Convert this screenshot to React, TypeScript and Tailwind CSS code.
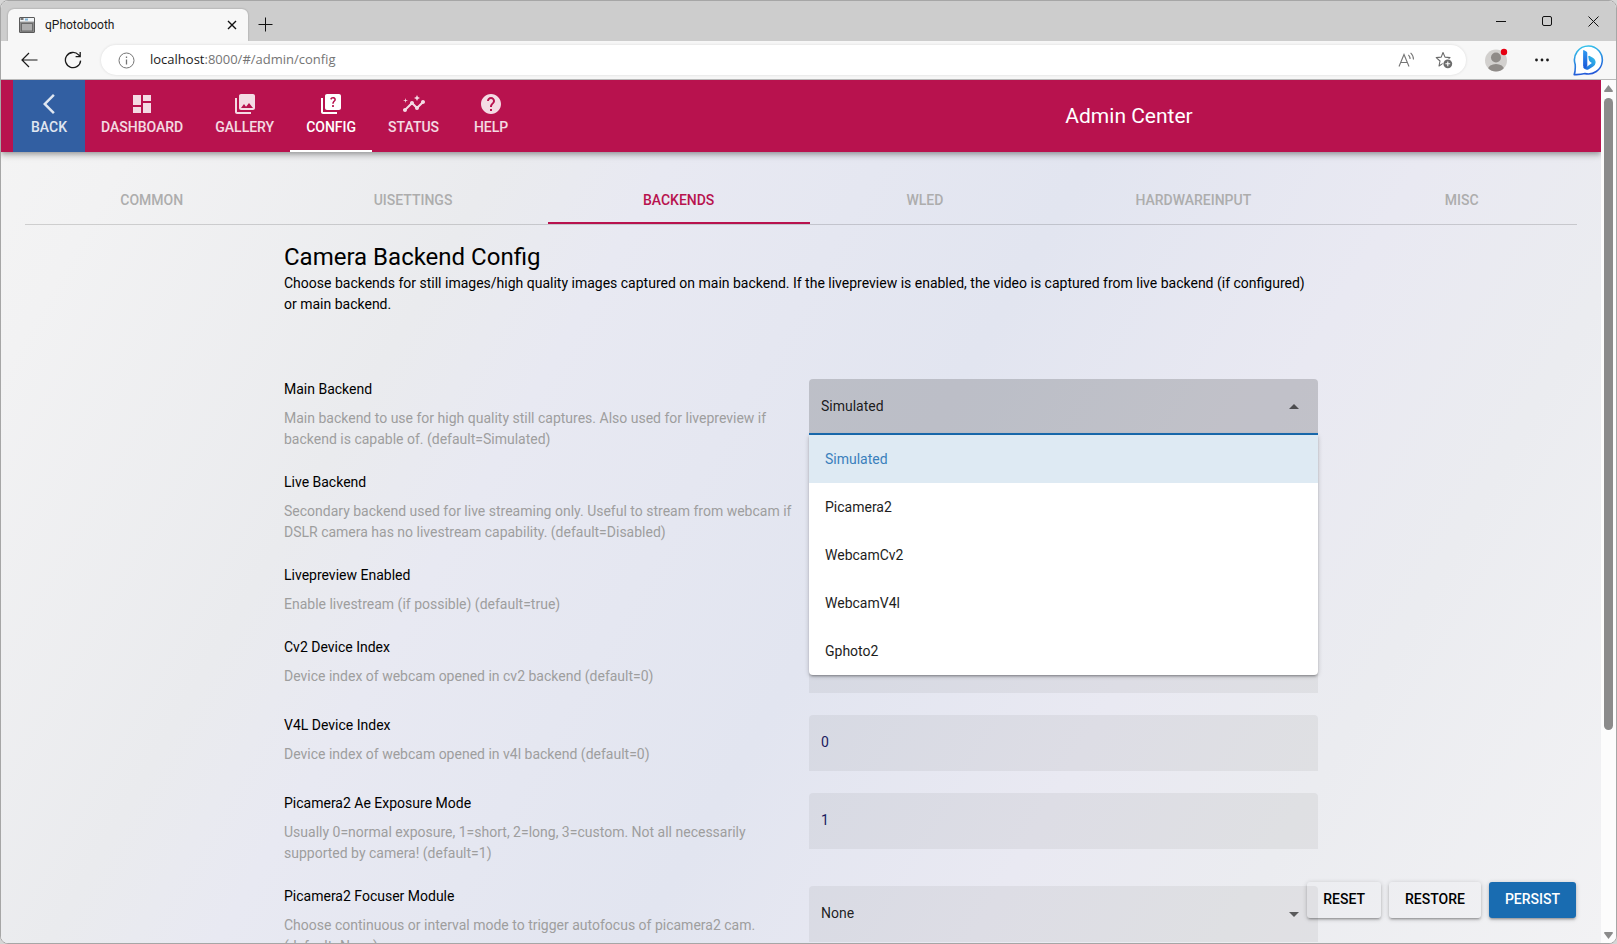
import { useState, type ReactNode } from "react";
import {
  MdArrowBackIosNew,
  MdDashboard,
  MdPhotoLibrary,
  MdQuiz,
  MdInsights,
  MdHelp,
  MdArrowDropDown,
  MdArrowDropUp,
} from "react-icons/md";

type Field = {
  id: string;
  label: string;
  hint: string;
  kind: "select" | "number" | "toggle";
  value: string;
  options?: string[];
};

const BACKENDS = ["Simulated", "Picamera2", "WebcamCv2", "WebcamV4l", "Gphoto2"];

const FIELDS: Field[] = [
  {
    id: "main-backend",
    label: "Main Backend",
    hint: "Main backend to use for high quality still captures. Also used for livepreview if backend is capable of. (default=Simulated)",
    kind: "select",
    value: "Simulated",
    options: BACKENDS,
  },
  {
    id: "live-backend",
    label: "Live Backend",
    hint: "Secondary backend used for live streaming only. Useful to stream from webcam if DSLR camera has no livestream capability. (default=Disabled)",
    kind: "select",
    value: "Disabled",
    options: ["Disabled", ...BACKENDS],
  },
  {
    id: "livepreview",
    label: "Livepreview Enabled",
    hint: "Enable livestream (if possible) (default=true)",
    kind: "toggle",
    value: "true",
  },
  {
    id: "cv2-index",
    label: "Cv2 Device Index",
    hint: "Device index of webcam opened in cv2 backend (default=0)",
    kind: "number",
    value: "0",
  },
  {
    id: "v4l-index",
    label: "V4L Device Index",
    hint: "Device index of webcam opened in v4l backend (default=0)",
    kind: "number",
    value: "0",
  },
  {
    id: "ae-mode",
    label: "Picamera2 Ae Exposure Mode",
    hint: "Usually 0=normal exposure, 1=short, 2=long, 3=custom. Not all necessarily supported by camera! (default=1)",
    kind: "number",
    value: "1",
  },
  {
    id: "focuser",
    label: "Picamera2 Focuser Module",
    hint: "Choose continuous or interval mode to trigger autofocus of picamera2 cam. (default=None)",
    kind: "select",
    value: "None",
    options: ["None", "Continuous", "Interval"],
  },
];

const NAV = [
  { label: "DASHBOARD", Icon: MdDashboard },
  { label: "GALLERY", Icon: MdPhotoLibrary },
  { label: "CONFIG", Icon: MdQuiz },
  { label: "STATUS", Icon: MdInsights },
  { label: "HELP", Icon: MdHelp },
];

const TABS = ["COMMON", "UISETTINGS", "BACKENDS", "WLED", "HARDWAREINPUT", "MISC"];

function ChromeButton({ label, children }: { label: string; children: ReactNode }) {
  return (
    <button type="button" aria-label={label} className="flex items-center justify-center">
      {children}
    </button>
  );
}

function TitleBar() {
  return (
    <div className="flex h-10 shrink-0 items-end bg-[#cdcdcd] pl-[7px]">
      <div className="flex h-8 w-[240px] items-center rounded-t-[6px] bg-[#f7f7f7] pr-[11px] pl-[11px] shadow-[0_0_2px_rgba(0,0,0,0.3)]">
        <svg width="16" height="16" viewBox="0 0 16 16" aria-hidden="true">
          <rect x="0.5" y="0.5" width="15" height="15" rx="0.5" fill="#8c8c8c" stroke="#5a5a5a" />
          <rect x="1" y="1" width="14" height="3.6" fill="#f2f5f7" />
          <rect x="1.5" y="1.2" width="3" height="1.6" fill="#555" />
          <rect x="6" y="1.5" width="3" height="2" fill="#7fb4d6" />
          <rect x="2.5" y="6.5" width="11" height="7.5" fill="#adadad" stroke="#6a6a6a" />
        </svg>
        <span className="ml-[10px] flex-1 text-xs text-[#1b1b1b]">qPhotobooth</span>
        <ChromeButton label="Close tab">
          <svg width="10" height="10" viewBox="0 0 10 10" stroke="#111" strokeWidth="1.4" aria-hidden="true">
            <path d="M1 1l8 8M9 1l-8 8" />
          </svg>
        </ChromeButton>
      </div>
      <div className="flex h-8 flex-1 items-center pb-px pl-[10px]">
        <ChromeButton label="New tab">
          <svg width="15" height="15" viewBox="0 0 15 15" stroke="#111" aria-hidden="true">
            <path d="M7.5 0.5v14M0.5 7.5h14" />
          </svg>
        </ChromeButton>
      </div>
      <div className="flex h-10 items-center gap-9 pr-[17px]">
        <ChromeButton label="Minimize">
          <svg width="10" height="10" viewBox="0 0 10 10" stroke="#111" aria-hidden="true">
            <path d="M0 5.5h10" />
          </svg>
        </ChromeButton>
        <ChromeButton label="Maximize">
          <svg width="10" height="10" viewBox="0 0 10 10" fill="none" stroke="#111" aria-hidden="true">
            <rect x="0.5" y="0.5" width="9" height="9" rx="1.5" />
          </svg>
        </ChromeButton>
        <ChromeButton label="Close window">
          <svg width="11" height="11" viewBox="0 0 11 11" stroke="#111" aria-hidden="true">
            <path d="M0.5 0.5l10 10M10.5 0.5l-10 10" />
          </svg>
        </ChromeButton>
      </div>
    </div>
  );
}

function AddressBar() {
  return (
    <div className="flex h-[39px] shrink-0 items-center border-b border-[#b9b9b9] bg-[#f7f7f7] pr-3 pl-5">
      <ChromeButton label="Back">
        <svg width="17" height="16" viewBox="0 0 17 16" fill="none" stroke="#1b1b1b" strokeWidth="1.2" aria-hidden="true">
          <path d="M16.5 8H1M8 1L1 8l7 7" />
        </svg>
      </ChromeButton>
      <div className="ml-[26px] flex">
        <ChromeButton label="Refresh">
          <svg width="18" height="18" viewBox="0 0 18 18" fill="none" stroke="#1b1b1b" strokeWidth="1.3" aria-hidden="true">
            <path d="M16.6 9.6A7.6 7.6 0 1 1 14.6 3.9L16 5.4M16.2 1v4.6h-4.6" />
          </svg>
        </ChromeButton>
      </div>
      <div className="ml-[19px] flex h-[30px] flex-1 items-center rounded-full bg-white pr-[13px] pl-[17px] shadow-[0_0_3px_rgba(0,0,0,0.12)]">
        <svg width="17" height="17" viewBox="0 0 17 17" fill="none" stroke="#757575" aria-hidden="true">
          <circle cx="8.5" cy="8.5" r="7.5" />
          <path d="M8.5 7.5v5M8.5 4.5v1.4" strokeWidth="1.3" />
        </svg>
        <p className="ml-[15px] flex-1 font-['Open_Sans','Noto_Sans',sans-serif] text-[13px] text-[#757575]">
          <span className="text-[#1b1b1b]">localhost</span>:8000/#/admin/config
        </p>
        <ChromeButton label="Read aloud">
          <svg width="17" height="16" viewBox="0 0 17 16" fill="none" stroke="#757575" strokeWidth="1.1" aria-hidden="true">
            <path d="M1 14.5L6 2.5l5 12M2.8 10.5h6.4M10.4 2.8q1.6 1.6 1.7 4.2M12.6 0.8q2.9 2.6 2.9 6.6" />
          </svg>
        </ChromeButton>
        <div className="ml-5 flex">
          <ChromeButton label="Add to favorites">
            <svg width="18" height="18" viewBox="0 0 18 18" aria-hidden="true">
              <path
                d="M8 1.5l2 4.6 5 .5-3.7 3.3L12 15l-4-2.6L4 15l1-5L1.2 6.6l5-.5z"
                fill="none"
                stroke="#6b6b6b"
                strokeWidth="1.1"
                strokeLinejoin="round"
              />
              <circle cx="12.8" cy="12.8" r="5.2" fill="#fff" />
              <circle cx="12.8" cy="12.8" r="4.4" fill="#6b6b6b" />
              <path d="M12.8 10.4v4.8M10.4 12.8h4.8" stroke="#fff" strokeWidth="1.1" />
            </svg>
          </ChromeButton>
        </div>
      </div>
      <div className="ml-[18px] flex items-center gap-[27px]">
        <ChromeButton label="Profile">
          <svg width="24" height="24" viewBox="0 0 24 24" aria-hidden="true">
            <clipPath id="avatar">
              <circle cx="12" cy="12.5" r="11" />
            </clipPath>
            <circle cx="12" cy="12.5" r="11" fill="#d2d0ce" />
            <circle cx="12" cy="9.5" r="5" fill="#8f8b88" />
            <ellipse cx="12" cy="21.5" rx="8" ry="5.5" fill="#8f8b88" clipPath="url(#avatar)" />
            <circle cx="20" cy="4" r="3.2" fill="#e60012" />
          </svg>
        </ChromeButton>
        <ChromeButton label="Settings and more">
          <svg width="14" height="4" viewBox="0 0 14 4" fill="#1b1b1b" aria-hidden="true">
            <circle cx="1.5" cy="2" r="1.4" />
            <circle cx="7" cy="2" r="1.4" />
            <circle cx="12.5" cy="2" r="1.4" />
          </svg>
        </ChromeButton>
      </div>
      <div className="ml-6 flex">
        <ChromeButton label="Discover">
          <svg width="31" height="31" viewBox="0 0 31 31" aria-hidden="true">
            <defs>
              <linearGradient id="ring" x1="0.3" y1="0" x2="0.5" y2="1">
                <stop offset="0" stopColor="#35c3ea" />
                <stop offset="1" stopColor="#2456d8" />
              </linearGradient>
              <linearGradient id="stem" x1="0" y1="0" x2="0" y2="1">
                <stop offset="0" stopColor="#2f9bf2" />
                <stop offset="1" stopColor="#1b57d8" />
              </linearGradient>
              <linearGradient id="bowl" x1="1" y1="0" x2="0" y2="1">
                <stop offset="0" stopColor="#33c5ea" />
                <stop offset="1" stopColor="#1b5fdc" />
              </linearGradient>
            </defs>
            <path
              d="M15.5 1A14 14 0 1 1 12 28.6Q7 29.9 1.2 29.6Q2.6 26 2.2 19.5A14 14 0 0 1 15.5 1z"
              fill="#fff"
              stroke="url(#ring)"
              strokeWidth="1.6"
              strokeLinejoin="round"
            />
            <path
              d="M15.2 11.2q0.6-0.6 1.5-0.2l3.2 1.7q2.9 1.8 2.7 5-0.2 2.2-2.4 3.7l-4.4 2.8q-2.6 1.3-4.8-0.6-0.9-0.9-0.7-2 2.4 1 4.6-0.6l4-3.1-1.5-1q-1.2-0.6-1.5-1.8z"
              fill="url(#bowl)"
            />
            <path d="M10.1 5.6q0.2-0.8 1-0.4l2.2 1.2q1 0.6 1 1.6v12.4q-0.4 2.4-2.2 2.6-2-0.4-2-2.8z" fill="url(#stem)" />
          </svg>
        </ChromeButton>
      </div>
    </div>
  );
}

function Header() {
  return (
    <header className="relative z-10 flex h-[72px] shrink-0 items-stretch bg-[#b8124e] px-3 shadow-[0_2px_4px_-1px_rgba(0,0,0,0.2),0_4px_5px_rgba(0,0,0,0.14),0_1px_10px_rgba(0,0,0,0.12)]">
      <nav className="flex text-sm font-medium text-white">
        <a href="#/" className="flex min-w-[72px] flex-col items-center bg-[#325fa2] px-4 pt-3">
          <MdArrowBackIosNew className="size-6 opacity-85" />
          <span className="leading-[22px] opacity-85">BACK</span>
        </a>
        {NAV.map(({ label, Icon }) => {
          const active = label === "CONFIG";
          return (
            <a
              key={label}
              href={`#/admin/${label.toLowerCase()}`}
              aria-current={active ? "page" : undefined}
              className={
                active
                  ? "flex min-w-[72px] flex-col items-center border-b-2 border-white px-4 pt-3"
                  : "flex min-w-[72px] flex-col items-center px-4 pt-3 text-white/85"
              }
            >
              <Icon className="size-6" />
              <span className="leading-[22px]">{label}</span>
            </a>
          );
        })}
      </nav>
      <h1 className="flex-1 self-center pl-[142px] text-center text-[21px] leading-8 text-white">Admin Center</h1>
    </header>
  );
}

function Control({ field }: { field: Field }) {
  const [value, setValue] = useState(field.value);
  const open = field.id === "main-backend";

  if (field.kind === "toggle") {
    return (
      <div className="flex h-10 items-center">
        <input id={field.id} type="checkbox" defaultChecked className="size-5 accent-[#196cb1]" />
      </div>
    );
  }

  if (field.kind === "number") {
    return (
      <input
        id={field.id}
        type="text"
        inputMode="numeric"
        value={value}
        onChange={(e) => setValue(e.target.value)}
        className="h-14 w-full rounded-t bg-black/5 px-3 pb-0.5 text-[#1a1a5e]"
      />
    );
  }

  return (
    <div className="relative self-start">
      <select
        id={field.id}
        value={value}
        onChange={(e) => setValue(e.target.value)}
        className={
          open
            ? "block h-14 w-full appearance-none rounded-t border-b-2 border-[#196cb1] bg-black/17 px-3 text-black/87"
            : "block h-14 w-full appearance-none rounded-t bg-black/5 px-3 pb-0.5 text-black/87"
        }
      >
        {field.options?.map((o) => (
          <option key={o}>{o}</option>
        ))}
      </select>
      <span className="pointer-events-none absolute inset-y-0 right-3 flex items-center text-black/60">
        {open ? <MdArrowDropUp className="size-6" /> : <MdArrowDropDown className="size-6" />}
      </span>
      {open && (
        <ul
          role="listbox"
          aria-label={field.label}
          className="absolute inset-x-0 top-full z-10 rounded-b bg-white shadow-[0_1px_5px_rgba(0,0,0,0.2),0_2px_2px_rgba(0,0,0,0.14),0_3px_1px_-2px_rgba(0,0,0,0.12)]"
        >
          {field.options?.map((o) => (
            <li
              key={o}
              role="option"
              aria-selected={o === value}
              onClick={() => setValue(o)}
              className={
                o === value
                  ? "flex h-12 items-center bg-[#deeaf3] px-4 text-[#3a80bc]"
                  : "flex h-12 items-center px-4 text-[#1d1d1d]"
              }
            >
              {o}
            </li>
          ))}
        </ul>
      )}
    </div>
  );
}

function Content() {
  return (
    <main className="min-h-0 flex-1 overflow-hidden px-6 pt-6">
      <div role="tablist" className="flex h-[49px] border-b border-black/15 text-sm font-medium">
        {TABS.map((t) => (
          <button
            key={t}
            type="button"
            role="tab"
            aria-selected={t === "BACKENDS"}
            className={
              t === "BACKENDS"
                ? "flex-auto border-b-2 border-[#b8124e] px-4 text-[#b8124e]"
                : "flex-auto px-4 pb-0.5 text-[#adadad]"
            }
          >
            <span className="inline-block min-w-10 align-middle">{t}</span>
          </button>
        ))}
      </div>
      <section className="mx-auto mt-4 max-w-[1034px] text-sm leading-[21px] text-black">
        <h2 className="text-2xl leading-8">Camera Backend Config</h2>
        <p>
          Choose backends for still images/high quality images captured on main backend. If the livepreview is enabled,
          the video is captured from live backend (if configured) or main backend.
        </p>
        <div className="mt-16 flex flex-col gap-[22px]">
          {FIELDS.map((f) => (
            <div key={f.id} className="grid grid-cols-2 gap-4">
              <div>
                <label htmlFor={f.id} className="block">
                  {f.label}
                </label>
                <p className="mt-2 text-[#9e9e9e]">{f.hint}</p>
              </div>
              <Control field={f} />
            </div>
          ))}
        </div>
      </section>
    </main>
  );
}

function Actions() {
  return (
    <div className="absolute right-[25px] bottom-[25px] z-20 flex gap-2 text-sm font-medium">
      <button
        type="button"
        className="h-9 rounded-[3px] px-4 pb-0.5 text-black shadow-[0_1px_5px_rgba(0,0,0,0.2),0_2px_2px_rgba(0,0,0,0.14),0_3px_1px_-2px_rgba(0,0,0,0.12)]"
      >
        RESET
      </button>
      <button
        type="button"
        className="h-9 rounded-[3px] px-4 pb-0.5 text-black shadow-[0_1px_5px_rgba(0,0,0,0.2),0_2px_2px_rgba(0,0,0,0.14),0_3px_1px_-2px_rgba(0,0,0,0.12)]"
      >
        RESTORE
      </button>
      <button
        type="button"
        className="h-9 rounded-[3px] bg-[#196cb1] px-4 pb-0.5 text-white shadow-[0_1px_5px_rgba(0,0,0,0.2),0_2px_2px_rgba(0,0,0,0.14),0_3px_1px_-2px_rgba(0,0,0,0.12)]"
      >
        PERSIST
      </button>
    </div>
  );
}

function ScrollBar() {
  return (
    <div aria-hidden="true" className="flex w-[15px] shrink-0 flex-col items-center bg-[#fcfcfc] pt-[5px] pb-1">
      <svg width="9" height="7" viewBox="0 0 9 7" fill="#8b8b8b">
        <path d="M4.5 0L9 6q0 1-1 1H1Q0 7 0 6z" />
      </svg>
      <div className="mt-[6px] h-[74%] w-[9px] rounded-full bg-[#8b8b8b]" />
      <svg width="9" height="7" viewBox="0 0 9 7" fill="#8b8b8b" className="mt-auto">
        <path d="M4.5 7L0 1q0-1 1-1h7q1 0 1 1z" />
      </svg>
    </div>
  );
}

export default function App() {
  return (
    <div className="h-screen bg-[#d6d6d6] font-[Roboto,sans-serif]">
      <div className="flex h-full flex-col overflow-hidden rounded-lg border border-[#a6a6a6] bg-white">
        <TitleBar />
        <AddressBar />
        <div className="flex min-h-0 flex-1">
          <div className="relative flex min-w-0 flex-1 flex-col overflow-hidden bg-[linear-gradient(120deg,#f4f4f4_0%,#f2f2f3_8%,#eaebee_26%,#e8e9f2_34%,#e2e5f0_54%,#e9e9f2_70%,#ebecf0_82%,#f2f2f4_100%)]">
            <Header />
            <Content />
            <Actions />
          </div>
          <ScrollBar />
        </div>
      </div>
    </div>
  );
}
